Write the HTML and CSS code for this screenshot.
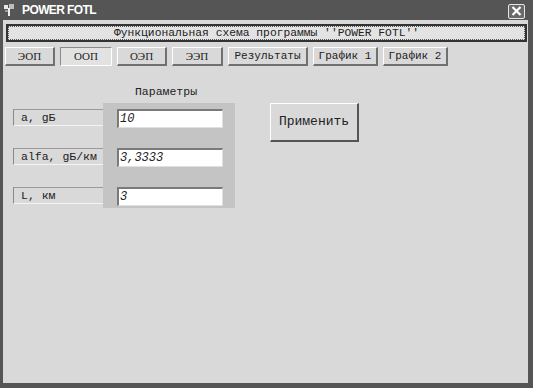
FILE: index.html
```html
<!DOCTYPE html>
<html>
<head>
  <meta charset="utf-8">
  <link rel="stylesheet" href="styles.css">
</head>
<body>
  <div class="window">
    <div class="titlebar">
      <svg class="app-icon" width="12" height="13" viewBox="0 0 12 13">
        <rect x="1" y="1" width="4" height="4" fill="#e8e8e8"/>
        <rect x="6" y="0" width="5" height="5" fill="#bdbdbd"/>
        <rect x="5" y="4" width="2" height="8" fill="#f0f0f0"/>
        <rect x="2" y="6" width="3" height="2" fill="#9a9a9a"/>
      </svg>
      <span class="title">POWER FOTL</span>
      <div class="close-btn">
        <svg width="11" height="10" viewBox="0 0 11 10">
          <path d="M1.5 1 L9.5 9 M9.5 1 L1.5 9" stroke="#fff" stroke-width="2.2"/>
        </svg>
      </div>
    </div>

    <div class="client">
      <div class="header">
        <div class="header-inner">Функциональная схема программы ''POWER FOTL''</div>
      </div>

      <div class="tabs">
        <div class="tab serif w50">ЭОП</div>
        <div class="tab serif w52 selected">ООП</div>
        <div class="tab serif w50">ОЭП</div>
        <div class="tab serif w51">ЭЭП</div>
        <div class="tab w80">Результаты</div>
        <div class="tab w65">График 1</div>
        <div class="tab w65">График 2</div>
      </div>

      <div class="main">
        <div class="labels">
          <div class="label">a, gБ</div>
          <div class="label">alfa, gБ/км</div>
          <div class="label">L, км</div>
        </div>
        <div class="panel-col">
          <div class="panel-title">Параметры</div>
          <div class="panel">
            <div class="field">10</div>
            <div class="field">3,3333</div>
            <div class="field">3</div>
          </div>
        </div>
        <div class="apply-btn">Применить</div>
      </div>
    </div>
  </div>
</body>
</html>
```

FILE: styles.css
```css
body {
  margin: 0;
  width: 533px;
  height: 388px;
  overflow: hidden;
  font-family: 'Liberation Mono', 'Courier New', monospace;
  color: #222;
}

.window {
  width: 533px;
  height: 388px;
  background: #555;
  display: flex;
  flex-direction: column;
}

/* title bar */
.titlebar {
  height: 20px;
  display: flex;
  align-items: center;
  padding: 0 8px 0 3px;
  flex-shrink: 0;
}

.app-icon {
  margin-top: 1px;
}

.title {
  margin-left: 7px;
  color: #fff;
  font-family: 'Liberation Sans', Arial, sans-serif;
  font-weight: bold;
  font-size: 12px;
  letter-spacing: -0.6px;
  flex: 1;
}

.close-btn {
  width: 15px;
  height: 13px;
  margin-top: 2px;
  border: 1px solid #e6e6e6;
  border-radius: 2px;
  background: #6a6a6a;
  display: flex;
  align-items: center;
  justify-content: center;
}

/* client area */
.client {
  flex: 1;
  margin: 0 5px 5px 3px;
  background: #d9d9d9;
  display: flex;
  flex-direction: column;
}

.header {
  margin: 4px 1px 0 3px;
  height: 18px;
  box-sizing: border-box;
  border: 2px solid #333;
  background: #f2f2f2;
}

.header-inner {
  height: 100%;
  box-sizing: border-box;
  border: 1px dotted #555;
  background: #e3e3e3;
  text-align: center;
  font-size: 11.3px;
  line-height: 12px;
}

/* tabs */
.tabs {
  display: flex;
  gap: 5px;
  margin: 5px 0 0 2px;
}

.tab {
  height: 19px;
  box-sizing: border-box;
  border-top: 1px solid #fff;
  border-left: 1px solid #fff;
  border-right: 2px solid #707070;
  border-bottom: 2px solid #707070;
  font-size: 11px;
  line-height: 16px;
  text-align: center;
}

.tab.serif {
  font-family: 'Liberation Serif', 'Times New Roman', serif;
  font-size: 11px;
}

.tab.selected {
  border: 1px solid #8a8a8a;
  border-right-color: #fff;
  border-bottom-color: #fff;
  background: #e2e2e2;
  line-height: 17px;
}

.w50 { width: 50px; }
.w51 { width: 51px; }
.w52 { width: 52px; }
.w65 { width: 65px; }
.w80 { width: 80px; }

/* parameters */
.main {
  display: flex;
  align-items: flex-start;
  margin: 19px 0 0 10px;
}

.labels {
  width: 90px;
  padding-top: 24px;
  display: flex;
  flex-direction: column;
  gap: 22px;
}

.label {
  height: 17px;
  box-sizing: border-box;
  border-top: 1px solid #9a9a9a;
  border-left: 1px solid #8a8a8a;
  border-bottom: 1px solid #f4f4f4;
  padding-left: 7px;
  font-size: 11.5px;
  line-height: 15px;
  white-space: nowrap;
}

.panel-col {
  width: 132px;
}

.panel-title {
  height: 14px;
  margin-bottom: 4px;
  padding-right: 6px;
  text-align: center;
  font-size: 11.5px;
  line-height: 14px;
}

.panel {
  background: #c4c4c4;
  padding: 6px 12px 2px 14px;
  display: flex;
  flex-direction: column;
  gap: 20px;
}

.field {
  height: 19px;
  box-sizing: border-box;
  background: #fff;
  border-top: 2px solid #7a7a7a;
  border-left: 2px solid #7a7a7a;
  border-right: 1px solid #e0e0e0;
  border-bottom: 1px solid #e0e0e0;
  padding-left: 1px;
  font-size: 12px;
  font-style: italic;
  line-height: 16px;
}

.apply-btn {
  width: 89px;
  height: 39px;
  box-sizing: border-box;
  margin: 18px 0 0 35px;
  border-top: 1px solid #fff;
  border-left: 1px solid #fff;
  border-right: 2px solid #555;
  border-bottom: 2px solid #555;
  font-size: 13px;
  line-height: 36px;
  text-align: center;
}
```
